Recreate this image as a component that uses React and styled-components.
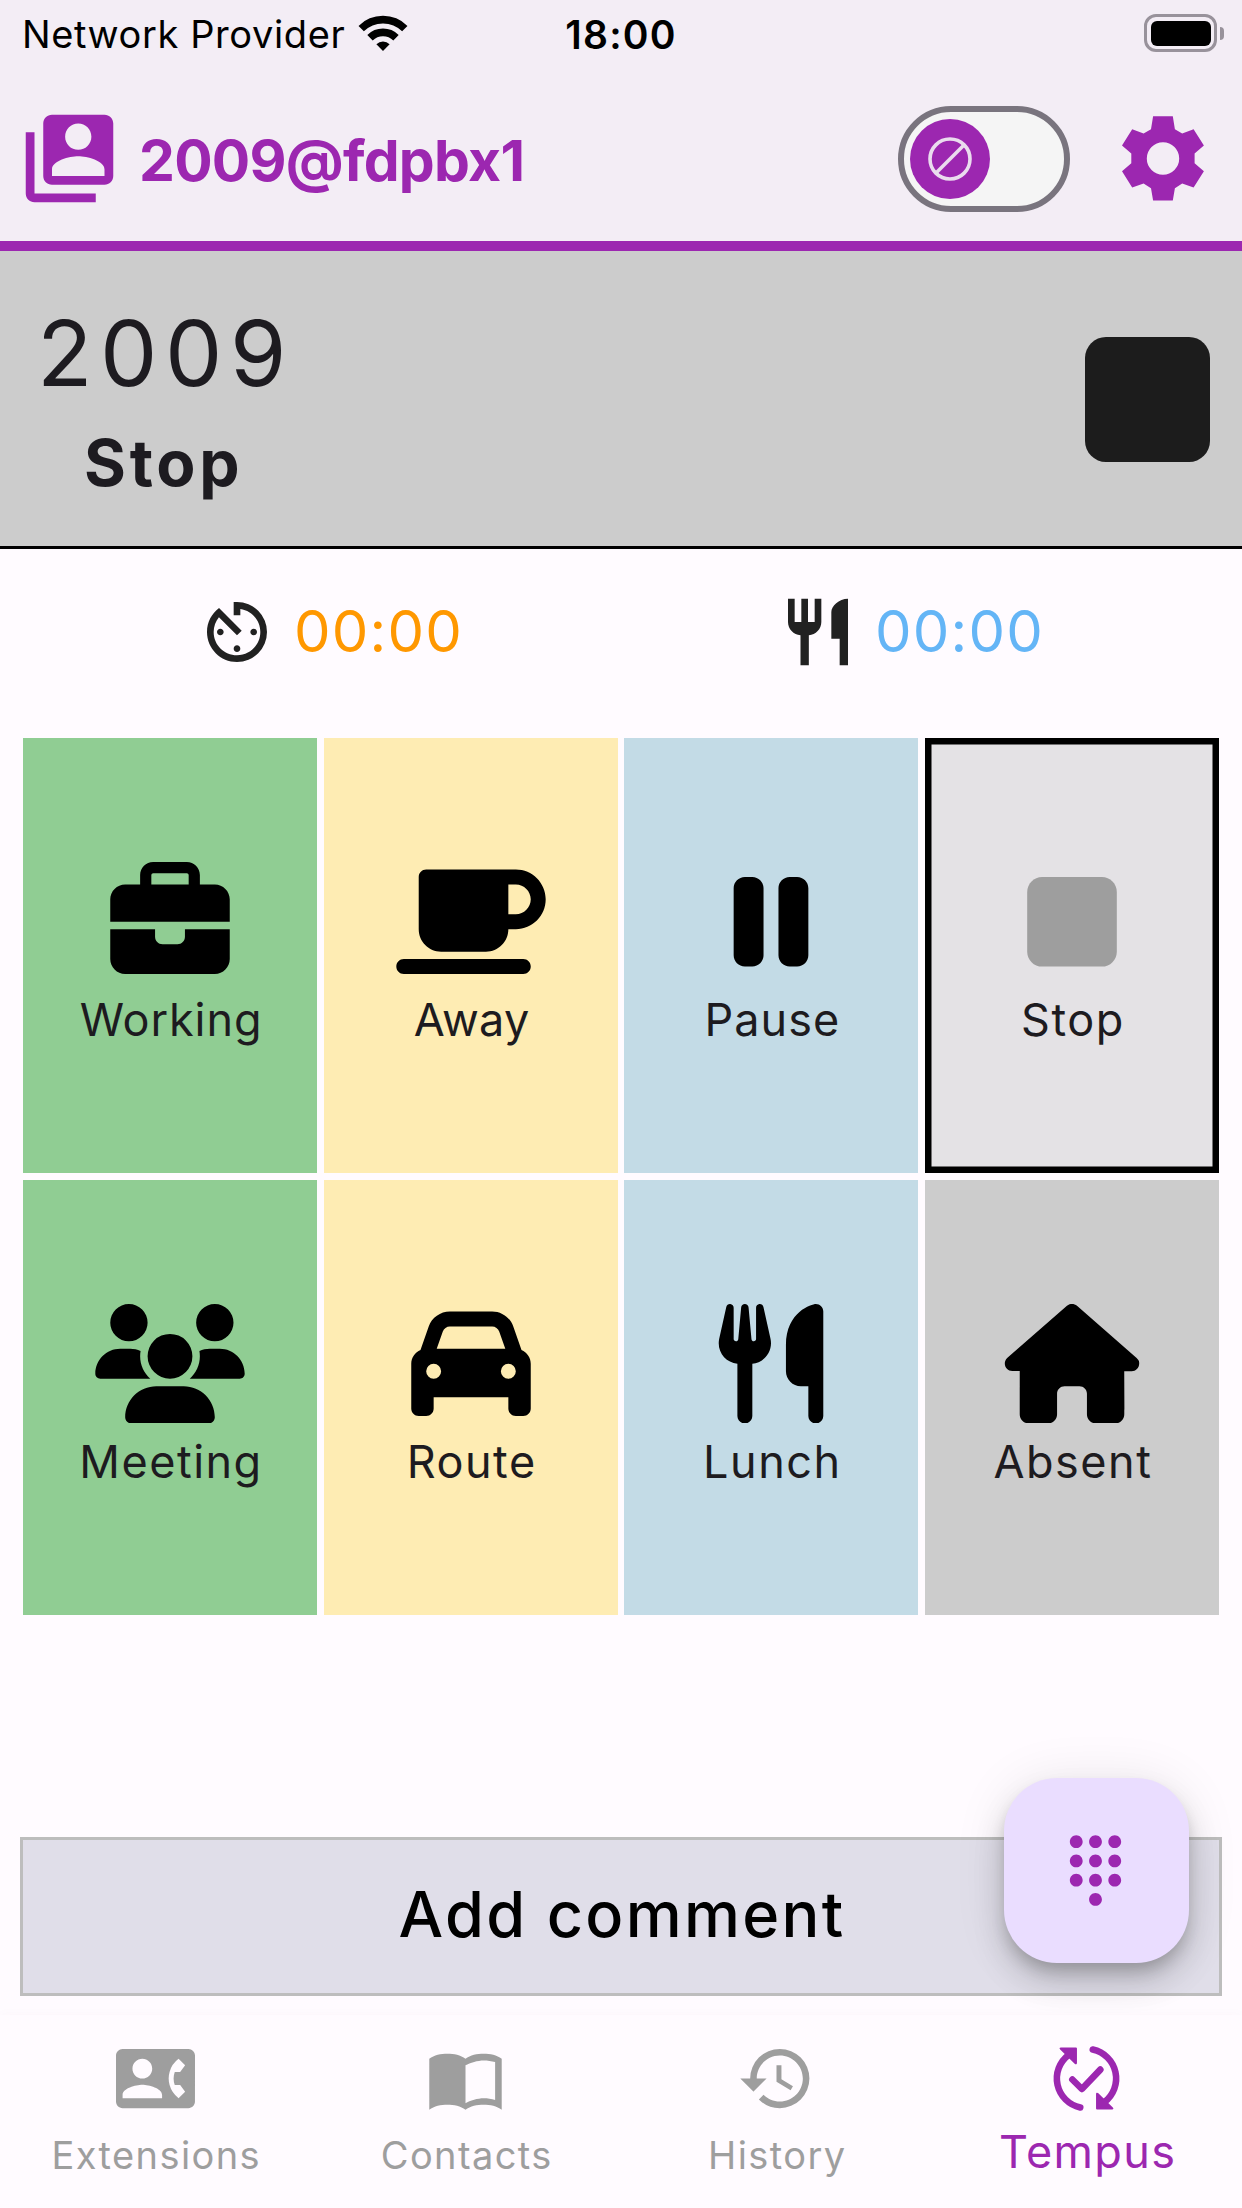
import React from "react";
import styled, { createGlobalStyle } from "styled-components";
import {
  FaBriefcase,
  FaMugSaucer,
  FaPause,
  FaStop,
  FaUsers,
  FaCar,
  FaUtensils,
  FaHouse,
} from "react-icons/fa6";
import {
  MdAvTimer,
  MdContactPhone,
  MdDialpad,
  MdHistory,
  MdRestaurant,
  MdSwitchAccount,
} from "react-icons/md";

const purple = "#9c27b0";
const ink = "#1d1b20";

const GlobalStyle = createGlobalStyle`
  * {
    box-sizing: border-box;
  }

  body {
    margin: 0;
    background: #fffbff;
    font-family: Inter, "Liberation Sans", sans-serif;
  }

  svg {
    display: block;
    flex: none;
  }

  button {
    font-family: inherit;
    padding: 0;
    border: 0;
    background: none;
  }
`;

const WifiIcon = () => (
  <svg width="50" height="36" viewBox="0 0 50 36">
    <path d="M25 36l-6.6-6.8a9.6 9.6 0 0 1 13.2 0z" fill="#000" />
    <path
      d="M12 22.8a18.4 18.4 0 0 1 26 0M3.2 13.6a31 31 0 0 1 43.6 0"
      fill="none"
      stroke="#000"
      strokeWidth="7.6"
    />
  </svg>
);

const BlockIcon = () => (
  <svg width="44" height="44" viewBox="0 0 44 44">
    <g fill="none" stroke="#eadcee" strokeWidth="3.6">
      <circle cx="22" cy="22" r="20" />
      <path d="M8 36L36 8" />
    </g>
  </svg>
);

const GearIcon = () => (
  <svg width="82" height="85" viewBox="0 0 82 84.4">
    <path
      fill={purple}
      fillRule="evenodd"
      d="M31.1 0H50.8L52.9 13L60.2 17.3L71.6 13L81.9 29.3L72.6 37.3V47L81.9 55L71.6 71.3L60.2 67.3L52.9 72L50.8 84.3H31.1L29 72L21.6 67.3L10.2 71.3L0 55L9.3 47V37.3L0 29.3L10.2 13L21.6 17.3L29 13ZM41 26a16.2 16.2 0 1 0 0 32.4a16.2 16.2 0 1 0 0-32.4Z"
    />
  </svg>
);

const BookIcon = () => (
  <svg width="79" height="79" viewBox="0 0 24 24" fill="currentColor">
    <path
      fillRule="evenodd"
      d="M1 6C2.45 4.9 4.55 4.5 6.5 4.5S10.55 4.9 12 6c1.45-1.1 3.55-1.5 5.5-1.5S21.55 4.9 23 6v15.5c-1.45-1.1-3.55-1.5-5.5-1.5s-4.05.4-5.5 1.5c-1.45-1.1-3.55-1.5-5.5-1.5S2.45 20.4 1 21.5ZM21 7c-1.1-.35-2.3-.5-3.5-.5-1.7 0-4.15.65-5.5 1.5v11.5c1.35-.85 3.8-1.5 5.5-1.5 1.2 0 2.4.15 3.5.5Z"
    />
  </svg>
);

const TempusIcon = () => (
  <svg width="79" height="79" viewBox="0 0 24 24">
    <g
      fill="none"
      stroke="currentColor"
      strokeWidth="2"
      strokeLinecap="round"
      strokeLinejoin="round"
    >
      <path d="M13.9 3.2A9 9 0 0 1 17.4 19.2M10.1 20.8A9 9 0 0 1 6.6 4.8" />
      <path d="M7.7 12.3L10.6 15.2L16.2 9.3" />
    </g>
    <path
      fill="currentColor"
      d="M9.1 2.9v4.4c0 .4-.4.5-.7.2L4 3.2c-.3-.3-.2-.6.2-.6h4.6c.2 0 .3.1.3.3zM14.9 21.1v-4.4c0-.4.4-.5.7-.2l4.4 4.3c.3.3.2.6-.2.6h-4.6c-.2 0-.3-.1-.3-.3z"
    />
  </svg>
);

const tiles = [
  { label: "Working", color: "#90cd93", icon: FaBriefcase, spacing: 0.9 },
  { label: "Away", color: "#feecb3", icon: FaMugSaucer, spacing: 0.3 },
  { label: "Pause", color: "#c3dbe6", icon: FaPause, spacing: 1 },
  { label: "Stop", color: "#e4e2e5", icon: FaStop, selected: true },
  { label: "Meeting", color: "#90cd93", icon: FaUsers },
  { label: "Route", color: "#feecb3", icon: FaCar },
  { label: "Lunch", color: "#c3dbe6", icon: FaUtensils },
  { label: "Absent", color: "#cccccc", icon: FaHouse },
];

const tabs = [
  { label: "Extensions", icon: <MdContactPhone size={79} /> },
  { label: "Contacts", icon: <BookIcon /> },
  { label: "History", icon: <MdHistory size={79} /> },
  { label: "Tempus", icon: <TempusIcon />, active: true },
];

const Status = () => (
  <StatusBar>
    <Carrier>
      <span>Network Provider</span>
      <WifiIcon />
    </Carrier>
    <Clock>18:00</Clock>
    <Battery>
      <BatteryBody />
      <BatteryTip />
    </Battery>
  </StatusBar>
);

const AppBar = () => (
  <Bar>
    <MdSwitchAccount size={105} color={purple} />
    <Account>2009@fdpbx1</Account>
    <Switch>
      <Knob>
        <BlockIcon />
      </Knob>
    </Switch>
    <GearIcon />
  </Bar>
);

export default function App() {
  return (
    <Screen>
      <GlobalStyle />
      <Header>
        <Status />
        <AppBar />
      </Header>
      <StatePanel>
        <div>
          <Extension>2009</Extension>
          <StateName>Stop</StateName>
        </div>
        <StopSquare />
      </StatePanel>
      <Timers>
        <Timer $color="#ff9800">
          <MdAvTimer size={80} />
          <span>00:00</span>
        </Timer>
        <Timer $color="#64b5f6">
          <MdRestaurant size={80} />
          <span>00:00</span>
        </Timer>
      </Timers>
      <Grid>
        {tiles.map(({ label, color, icon: Icon, selected, spacing = 1.5 }) => (
          <Tile key={label} $color={color} $selected={selected}>
            <Icon />
            <TileLabel $spacing={spacing}>{label}</TileLabel>
          </Tile>
        ))}
      </Grid>
      <CommentArea>
        <CommentButton>Add comment</CommentButton>
        <Fab>
          <MdDialpad size={77} />
        </Fab>
      </CommentArea>
      <TabBar>
        {tabs.map(({ label, icon, active }) => (
          <Tab key={label} $active={active}>
            {icon}
            <TabLabel $active={active}>{label}</TabLabel>
          </Tab>
        ))}
      </TabBar>
    </Screen>
  );
}

const Screen = styled.div`
  display: flex;
  flex-direction: column;
  width: 1242px;
  height: 2208px;
  overflow: hidden;
  color: ${ink};
`;

const Header = styled.header`
  height: 251px;
  background: #f3edf5;
  border-bottom: 10px solid ${purple};
`;

const StatusBar = styled.div`
  display: grid;
  grid-template-columns: 1fr auto 1fr;
  align-items: center;
  height: 66px;
  padding: 0 18px 0 22px;
  color: #000;
`;

const Carrier = styled.div`
  display: flex;
  align-items: center;
  gap: 13px;
  font-size: 38px;
  letter-spacing: 0.6px;

  span {
    padding-top: 2px;
  }
`;

const Clock = styled.div`
  padding: 2px 4px 0 0;
  font-size: 39px;
  font-weight: 600;
  letter-spacing: 1.2px;
`;

const Battery = styled.div`
  display: flex;
  justify-content: flex-end;
  align-items: center;
  gap: 3px;
`;

const BatteryBody = styled.div`
  width: 73px;
  height: 38px;
  padding: 3.5px;
  border: 3px solid #98929b;
  border-radius: 12px;

  &::after {
    content: "";
    display: block;
    height: 100%;
    border-radius: 6px;
    background: #000;
  }
`;

const BatteryTip = styled.div`
  width: 4px;
  height: 13px;
  border-radius: 0 4px 4px 0;
  background: #98929b;
`;

const Bar = styled.div`
  display: flex;
  align-items: center;
  height: 175px;
  padding: 10px 38px 0 17px;
`;

const Account = styled.div`
  flex: 1;
  margin-left: 17px;
  padding-top: 3px;
  color: ${purple};
  font-size: 57px;
  font-weight: 700;
  letter-spacing: -0.75px;
`;

const Switch = styled.div`
  display: flex;
  align-items: center;
  width: 172px;
  height: 106px;
  margin-right: 52px;
  padding-left: 6px;
  border: 6.6px solid #79747e;
  border-radius: 53px;
  background: #f5f5f5;
`;

const Knob = styled.div`
  display: grid;
  place-items: center;
  width: 80px;
  height: 80px;
  border-radius: 50%;
  background: ${purple};
`;

const StatePanel = styled.section`
  display: flex;
  align-items: center;
  justify-content: space-between;
  height: 298px;
  padding: 2px 32px 0 37px;
  background: #cccccc;
  border-bottom: 3px solid #000;
`;

const Extension = styled.div`
  padding-top: 16px;
  font-size: 91px;
  line-height: 110px;
  letter-spacing: 7.6px;
`;

const StateName = styled.div`
  padding-left: 47px;
  font-size: 64px;
  line-height: 110px;
  font-weight: 700;
  letter-spacing: 3.8px;
`;

const StopSquare = styled.div`
  width: 125px;
  height: 125px;
  border-radius: 21px;
  background: #1c1c1c;
`;

const Timers = styled.section`
  display: flex;
  height: 189px;
  padding: 43px 0 0 197px;
`;

const Timer = styled.div`
  display: flex;
  flex: none;
  gap: 17px;
  width: 581px;
  height: 80px;
  color: #212121;

  span {
    color: ${props => props.$color};
    font-size: 58px;
    line-height: 78px;
    letter-spacing: 1.2px;
  }
`;

const Grid = styled.section`
  display: grid;
  grid-template-columns: repeat(4, 1fr);
  grid-auto-rows: 435.3px;
  gap: 6.6px;
  padding: 0 23px;
`;

const Tile = styled.button`
  display: flex;
  flex-direction: column;
  align-items: center;
  padding-top: 124px;
  background: ${props => props.$color};
  box-shadow: ${props => (props.$selected ? "inset 0 0 0 6.5px #000" : "none")};

  /* glyphs differ in width, all share one height */
  svg {
    width: 160px;
    height: 119.5px;
    color: ${props => (props.$selected ? "#9e9e9e" : "#000")};
  }
`;

const TileLabel = styled.span`
  margin-top: 10.5px;
  padding-left: 2px;
  color: ${ink};
  font-size: 45px;
  line-height: 56px;
  letter-spacing: ${props => props.$spacing}px;
`;

const CommentArea = styled.section`
  position: relative;
  margin-top: 222px;
  padding: 0 20px;
`;

const CommentButton = styled.button`
  display: block;
  width: 100%;
  height: 159px;
  padding: 0 0 5px 2px;
  border: 3px solid #bdbdbd;
  background: #e0dee9;
  color: #000;
  font-size: 63px;
  font-weight: 500;
  letter-spacing: 2.3px;
`;

/* floats over the comment button */
const Fab = styled.button`
  position: absolute;
  top: -59px;
  right: 53px;
  display: grid;
  place-items: center;
  width: 185px;
  height: 185px;
  padding: 0 2px 1px 0;
  border-radius: 53px;
  background: #eaddff;
  color: ${purple};
  box-shadow: 0 10px 16px -3px rgba(0, 0, 0, 0.2),
    0 20px 33px 0 rgba(0, 0, 0, 0.14), 0 3px 54px 0 rgba(0, 0, 0, 0.09);
`;

const TabBar = styled.nav`
  display: grid;
  grid-template-columns: repeat(4, 1fr);
  flex: 1;
  margin-top: 19px;
  background: #fffbff;
  box-shadow: 0 -2px 10px rgba(80, 0, 40, 0.02);
  z-index: 1;
`;

const Tab = styled.div`
  display: flex;
  flex-direction: column;
  align-items: center;
  padding-top: 24px;
  color: ${props => (props.$active ? purple : "#9e9e9e")};
`;

const TabLabel = styled.span`
  margin-top: ${props => (props.$active ? 6 : 9)}px;
  padding-left: 2px;
  font-size: ${props => (props.$active ? 45 : 38)}px;
  line-height: 56px;
  letter-spacing: 1.4px;
`;
